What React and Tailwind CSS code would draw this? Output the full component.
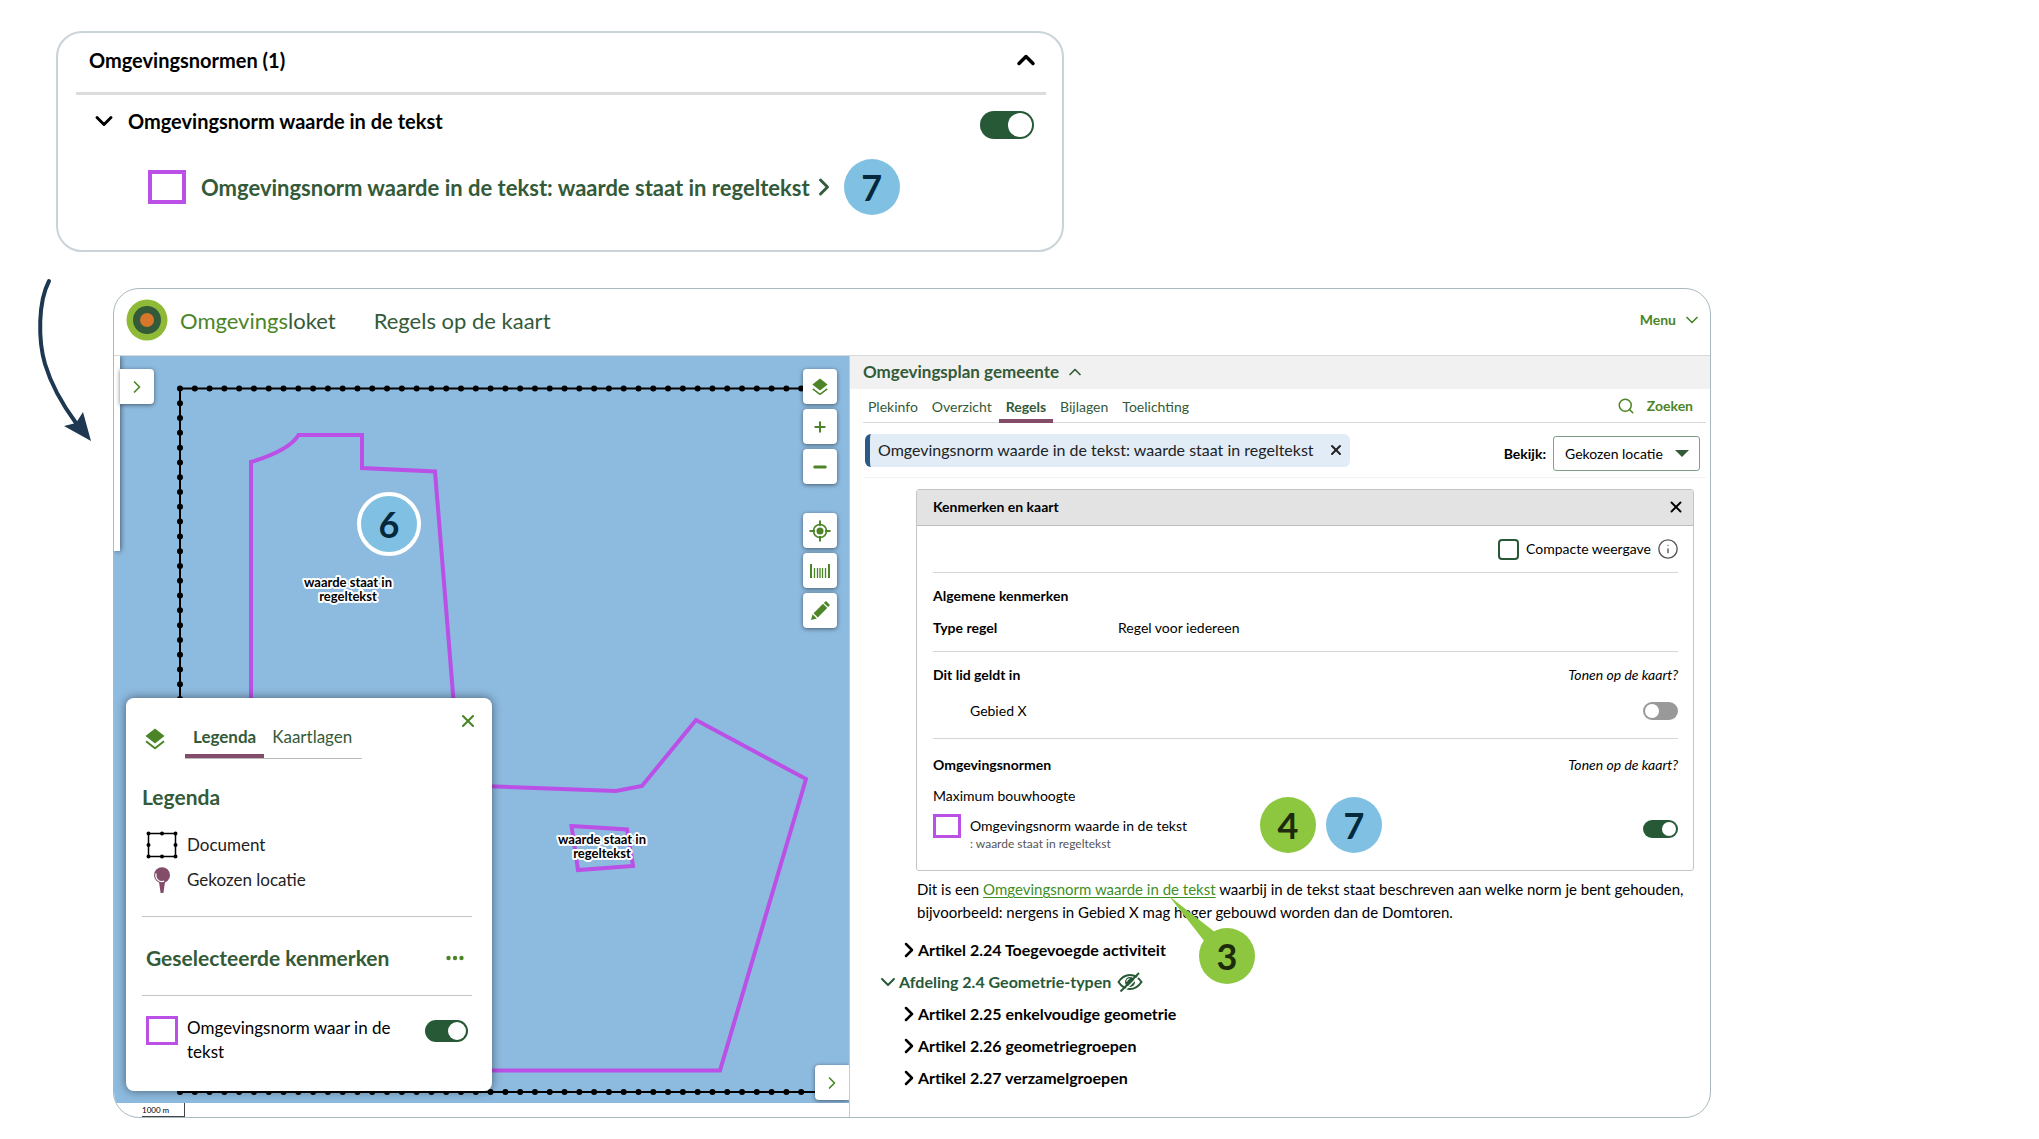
import { ChevronDown, ChevronRight, ChevronUp, Info, Minus, Plus, Search, X } from "lucide-react";

const articles = [
  "Artikel 2.25 enkelvoudige geometrie",
  "Artikel 2.26 geometriegroepen",
  "Artikel 2.27 verzamelgroepen",
];

const tabs = ["Plekinfo", "Overzicht", "Regels", "Bijlagen", "Toelichting"];

const toggleSizes = {
  sm: "h-[18px] w-[35px] before:size-[14px] before:top-[2px]",
  md: "h-[22px] w-[43px] before:size-[18px] before:top-[2px]",
  lg: "h-[28px] w-[54px] before:size-[24px] before:top-[2px]",
};

function Toggle({ size = "sm", label, defaultChecked = true, className = "" }) {
  return (
    <input
      type="checkbox"
      role="switch"
      aria-label={label}
      defaultChecked={defaultChecked}
      className={`relative shrink-0 appearance-none rounded-full bg-[#999999] before:absolute before:left-[2px] before:rounded-full before:bg-white checked:bg-[#275937] checked:before:right-[2px] checked:before:left-auto ${toggleSizes[size]} ${className}`}
    />
  );
}

const badgeColors = {
  blue: "bg-[#80c1e3] text-[#04293d]",
  green: "bg-[#8dc63f] text-[#1d2b0c]",
};

function Badge({ color = "blue", className = "", children }) {
  return (
    <span
      className={`flex size-14 shrink-0 items-center justify-center rounded-full text-4xl leading-none font-bold ${badgeColors[color]} ${className}`}
    >
      {children}
    </span>
  );
}

function LayersIcon({ className }) {
  return (
    <svg viewBox="0 0 20 22" className={className} fill="none" aria-hidden="true">
      <path d="M10 0.500 19.500 8 10 15.500 0.500 8Z" fill="#4b8527" />
      <path d="M1 13.200 10 20.200 19 13.200" stroke="#4b8527" strokeWidth="2" />
    </svg>
  );
}

function LocateIcon() {
  return (
    <svg viewBox="0 0 22 22" className="size-[22px]" fill="none" stroke="#4b8527" strokeWidth="1.600">
      <circle cx="11" cy="11" r="6.500" />
      <circle cx="11" cy="11" r="3.500" fill="#4b8527" stroke="none" />
      <path d="M11 0.500V6M11 16v5.500M0.500 11H6M16 11h5.500" strokeWidth="2" />
    </svg>
  );
}

function RulerIcon() {
  return (
    <svg viewBox="0 0 20 14" className="h-[14px] w-5" stroke="#4b8527">
      <path d="M1 0v14M19 0v14" strokeWidth="2" />
      <path d="M4.500 4v10M7.500 4v10M10 4v10M12.500 4v10M15.500 4v10" strokeWidth="1.300" />
    </svg>
  );
}

function PencilIcon() {
  return (
    <svg viewBox="0 0 20 20" className="size-5" fill="#4b8527">
      <path d="M1 19l1.600-5.800 4.200 4.200Z" />
      <path d="M3.600 12.200 13 2.800l4.200 4.200-9.400 9.400Z" />
      <path d="M13.900 1.900 15.200.6a1 1 0 0 1 1.400 0l2.800 2.800a1 1 0 0 1 0 1.400L18.100 6.100Z" />
    </svg>
  );
}

function PinIcon() {
  return (
    <svg viewBox="0 0 16 26" className="h-[26px] w-4" aria-hidden="true">
      <path d="M5 15h6L9.400 26H6.600Z" fill="#834c68" />
      <circle cx="8" cy="8.200" r="8" fill="#834c68" />
      <path d="M2.200 6.500a6 6 0 0 0 8 7.500" fill="none" stroke="#fff" strokeWidth="1.300" />
    </svg>
  );
}

function DocumentIcon() {
  return (
    <svg viewBox="0 0 32 28" className="h-7 w-8" fill="none" stroke="#000" aria-hidden="true">
      <path d="M2.500 2.500h27v23h-27Z" strokeWidth="1.500" />
      <path
        d="M2.500 2.500h0M16 2.500h0M29.500 2.500h0M2.500 14h0M29.500 14h0M2.500 25.500h0M16 25.500h0M29.500 25.500h0"
        strokeWidth="4"
        strokeLinecap="round"
      />
    </svg>
  );
}

function HiddenIcon() {
  return (
    <svg viewBox="0 0 26 20" className="h-5 w-[26px]" fill="none" stroke="#275937" strokeWidth="2">
      <path d="M1.500 10C4.500 5.500 8.500 3 13 3s8.500 2.500 11.500 7c-3 4.500-7 7-11.500 7S4.500 14.500 1.500 10Z" />
      <circle cx="13" cy="10" r="5" fill="#275937" stroke="none" />
      <path d="M9.500 9.500a4 4 0 0 1 3-3" stroke="#fff" strokeWidth="1.200" />
      <path d="M5.500 20.500 23.500 2.500" stroke="#fff" strokeWidth="1.500" />
      <path d="M3.500 19.500 22 1" />
    </svg>
  );
}

function NormCard() {
  return (
    <section className="ml-14 max-w-[1008px] rounded-[26px] border-2 border-[#c9d3d8] bg-white pr-4 pb-[23px] pl-[18px]">
      <div className="flex h-[62px] items-center justify-between border-b-[3px] border-[#dcdcdc] pr-[6px] pb-[6px] pl-[13px]">
        <h2 className="text-xl font-bold">Omgevingsnormen (1)</h2>
        <button type="button" aria-label="Inklappen">
          <ChevronUp className="size-7" strokeWidth={3} />
        </button>
      </div>
      <div className="flex h-[52px] items-center gap-[10px] pr-3 pl-[14px]">
        <button type="button" aria-label="Norm inklappen">
          <ChevronDown className="size-7" strokeWidth={2.5} />
        </button>
        <h3 className="grow text-xl font-bold">Omgevingsnorm waarde in de tekst</h3>
        <Toggle size="lg" label="Omgevingsnorm waarde in de tekst" className="mt-2" />
      </div>
      <div className="flex h-20 items-center pl-[72px]">
        <span className="h-[34px] w-[38px] border-4 border-[#ba50e6]" />
        <a href="#norm" className="ml-[15px] flex items-center text-[22px] font-bold text-[#335a39]">
          Omgevingsnorm waarde in de tekst: waarde staat in regeltekst
          <ChevronRight className="size-7" strokeWidth={2.5} />
        </a>
        <Badge className="ml-[6px]">7</Badge>
      </div>
    </section>
  );
}

function CurvedArrow() {
  return (
    <svg
      viewBox="0 0 60 166"
      className="absolute top-[278px] left-[35px] h-[166px] w-[60px]"
      fill="none"
      aria-hidden="true"
    >
      <path d="M14 3C3 24 3 62 10 86c6 20 17 40 31 59" stroke="#1d3850" strokeWidth="4" strokeLinecap="round" />
      <path d="M56 163 29 148l12-3 7-11Z" fill="#1d3850" />
    </svg>
  );
}

function Header() {
  return (
    <header className="flex h-[67px] items-center border-b border-[#d5dadb] pr-2 pb-1 pl-3">
      <svg viewBox="0 0 42 42" className="size-[42px]" aria-hidden="true">
        <circle cx="21" cy="21" r="20.500" fill="#8fba38" />
        <circle cx="21" cy="21" r="14" fill="#335a39" />
        <circle cx="21" cy="21" r="7" fill="#d8762c" />
      </svg>
      <a href="#home" className="ml-3 text-[22px] text-[#335a39]">
        <span className="text-[#4b8527]">Omgevings</span>loket
      </a>
      <h1 className="ml-[38px] text-[22px] text-[#335a39]">Regels op de kaart</h1>
      <button type="button" className="ml-auto flex items-center gap-[6px] text-sm font-bold text-[#4b8527]">
        Menu
        <ChevronDown className="size-5" strokeWidth={2} />
      </button>
    </header>
  );
}

function MapButton({ label, className = "", children }) {
  return (
    <button
      type="button"
      aria-label={label}
      className={`flex h-[35px] w-[34px] items-center justify-center rounded-sm bg-white text-[#4b8527] shadow-[0_1px_4px_rgba(0,0,0,0.5)] ${className}`}
    >
      {children}
    </button>
  );
}

function MapLabel({ x, y }) {
  return (
    <text
      x={x}
      y={y}
      textAnchor="middle"
      className="fill-black stroke-white stroke-[4px] text-[13px] font-bold [paint-order:stroke]"
      strokeLinejoin="round"
    >
      <tspan x={x}>waarde staat in</tspan>
      <tspan x={x} dy="14">
        regeltekst
      </tspan>
    </text>
  );
}

function Legend() {
  return (
    <aside className="absolute bottom-3 left-3 w-[366px] rounded-lg bg-white pt-5 pr-5 pb-[27px] pl-4 shadow-[0_0_10px_rgba(0,0,0,0.5)]">
      <button type="button" aria-label="Sluiten" className="absolute top-[13px] right-[14px] text-[#4b8527]">
        <X className="size-5" strokeWidth={2.5} />
      </button>
      <div className="flex h-[41px] items-center">
        <LayersIcon className="ml-[3px] h-[22px] w-5" />
        <nav className="ml-5 flex h-full border-b border-[#bbbbbb] text-[17px] leading-[38px] text-[#335a39]">
          <a href="#legenda" className="border-b-4 border-[#834c68] px-2 font-bold">
            Legenda
          </a>
          <a href="#kaartlagen" className="pr-[10px] pl-2">
            Kaartlagen
          </a>
        </nav>
      </div>
      <h2 className="mt-6 mb-4 text-[21px] leading-7 font-bold text-[#335a39]">Legenda</h2>
      <ul className="border-b border-[#c4c4c4] pb-[19px] text-[17px] leading-[35px] text-[#222]">
        <li className="flex h-[35px] items-center gap-[9px] pl-1">
          <DocumentIcon />
          Document
        </li>
        <li className="flex h-[35px] items-center gap-[9px] pl-1">
          <span className="flex w-8 justify-center">
            <PinIcon />
          </span>
          Gekozen locatie
        </li>
      </ul>
      <div className="flex h-[79px] items-center justify-between border-b border-[#c4c4c4] pt-1 pr-2 pl-1">
        <h2 className="text-[21px] font-bold text-[#335a39]">Geselecteerde kenmerken</h2>
        <button type="button" aria-label="Meer opties">
          <svg viewBox="0 0 18 6" className="h-[6px] w-[18px]" fill="#4b8527">
            <circle cx="2.500" cy="3" r="2.200" />
            <circle cx="9" cy="3" r="2.200" />
            <circle cx="15.500" cy="3" r="2.200" />
          </svg>
        </button>
      </div>
      <div className="flex items-start pt-5 pr-1 pl-1">
        <span className="h-[29px] w-8 shrink-0 border-3 border-[#ba50e6]" />
        <p className="ml-[9px] w-[220px] text-[17px] leading-6">Omgevingsnorm waar in de tekst</p>
        <span className="ml-auto flex pt-1">
          <Toggle size="md" label="Omgevingsnorm waar in de tekst" />
        </span>
      </div>
    </aside>
  );
}

function MapPane() {
  return (
    <div className="flex flex-col border-r border-[#b9cfdc]">
      <div className="relative grow overflow-hidden bg-[#8dbadf]">
        <svg className="absolute inset-0 size-full" fill="none">
          <g stroke="#000">
            <path d="M66 32.500H701M66 32.500V736H710" strokeWidth="2" />
            <path
              d="M66 32.500H690M66 32.500V736M66 736H701"
              strokeWidth="6"
              strokeLinecap="round"
              strokeDasharray="0 14.790"
            />
          </g>
          <g stroke="#ba50e6" strokeWidth="4">
            <path d="M137 400V106C160 99 178 90 184.500 79H248V112L321 115.500 344 400" />
            <path d="M340 429 502 435 528 430 582 364 692 423 606 714.500H340" />
            <path d="M457.500 470 513 473.500 519 510 464 514Z" />
          </g>
          <MapLabel x={234} y={231} />
          <MapLabel x={488} y={488} />
        </svg>

        <div className="absolute top-0 left-0 h-[195px] w-[6px] bg-white shadow-[1px_0_5px_rgba(0,0,0,0.5)]" />
        <MapButton label="Zijpaneel openen" className="absolute top-[13px] left-[6px] rounded-l-none">
          <ChevronRight className="size-5" />
        </MapButton>

        <Badge className="absolute top-[136px] left-[243px] box-content border-4 border-white">6</Badge>

        <div className="absolute top-[13px] right-3 flex flex-col gap-[5px]">
          <MapButton label="Kaartlagen">
            <LayersIcon className="h-[18px] w-4" />
          </MapButton>
          <MapButton label="Inzoomen">
            <Plus className="size-4" strokeWidth={3} />
          </MapButton>
          <MapButton label="Uitzoomen">
            <Minus className="size-[18px]" strokeWidth={4} />
          </MapButton>
          <MapButton label="Mijn locatie" className="mt-6">
            <LocateIcon />
          </MapButton>
          <MapButton label="Meten">
            <RulerIcon />
          </MapButton>
          <MapButton label="Tekenen">
            <PencilIcon />
          </MapButton>
        </div>

        <MapButton label="Paneel inklappen" className="absolute right-0 bottom-[3px] rounded-r-none">
          <ChevronRight className="size-5" />
        </MapButton>
        <Legend />
      </div>
      <div className="flex h-[14px] pl-7">
        <span className="w-[43px] border-r border-b border-[#444] text-[8px] leading-[14px]">1000 m</span>
      </div>
    </div>
  );
}

function Section({ title, action, children }) {
  return (
    <div className="mr-[15px] ml-4 border-b border-[#d5d5d5] py-[7px] last:border-0 last:pt-[10px] last:pb-4">
      <div className="flex h-8 items-center justify-between">
        <h4 className="font-bold">{title}</h4>
        {action && <span className="italic">{action}</span>}
      </div>
      {children}
    </div>
  );
}

function Properties() {
  return (
    <section className="mt-[11px] mr-4 ml-[66px] rounded-[3px] border border-[#c4c4c4] text-sm">
      <div className="flex h-9 items-center justify-between border-b border-[#bdbdbd] bg-[#e3e3e3] pr-2 pb-[2px] pl-4">
        <h3 className="font-bold">Kenmerken en kaart</h3>
        <button type="button" aria-label="Kenmerken sluiten">
          <X className="size-[18px]" strokeWidth={2.5} />
        </button>
      </div>
      <div className="mr-[15px] ml-4 flex h-[47px] items-center justify-end gap-[6px] border-b border-[#d5d5d5]">
        <label className="flex items-center gap-[7px]">
          <input type="checkbox" className="size-[21px] appearance-none rounded-sm border-2 border-[#275937]" />
          Compacte weergave
        </label>
        <Info className="-mr-px size-[22px] text-[#555]" strokeWidth={1.5} />
      </div>
      <Section title="Algemene kenmerken">
        <dl className="flex h-8 items-center">
          <dt className="w-[185px] font-bold">Type regel</dt>
          <dd>Regel voor iedereen</dd>
        </dl>
      </Section>
      <Section title="Dit lid geldt in" action="Tonen op de kaart?">
        <div className="flex h-10 items-center justify-between pl-[37px]">
          Gebied X
          <Toggle label="Gebied X" defaultChecked={false} />
        </div>
      </Section>
      <Section title="Omgevingsnormen" action="Tonen op de kaart?">
        <p className="leading-[30px]">Maximum bouwhoogte</p>
        <div className="relative flex h-[43px] items-start pt-[3px]">
          <span className="h-6 w-7 border-3 border-[#ba50e6]" />
          <div className="ml-[9px] grow">
            <p className="leading-6">Omgevingsnorm waarde in de tekst</p>
            <p className="text-xs leading-3 text-[#555]">: waarde staat in regeltekst</p>
          </div>
          <div className="absolute -top-[14px] left-[327px] flex gap-[10px]">
            <Badge color="green">4</Badge>
            <Badge>7</Badge>
          </div>
          <span className="flex pt-[6px]">
            <Toggle label="Maximum bouwhoogte" />
          </span>
        </div>
      </Section>
    </section>
  );
}

function ArticleRow({ title }) {
  return (
    <li className="ml-[47px] flex h-8 items-center">
      <ChevronRight className="-mr-[3px] size-6" strokeWidth={2.5} />
      <a href="#artikel">{title}</a>
    </li>
  );
}

function RulesPane() {
  return (
    <div className="min-w-0 pb-[23px]">
      <div className="flex h-[33px] items-center bg-[#f1f1f1] pb-px pl-[13px] text-[#335a39]">
        <h2 className="text-[17px] font-bold">Omgevingsplan gemeente</h2>
        <ChevronUp className="ml-[6px] size-5" />
      </div>

      <div className="mr-1 ml-[13px] flex h-[34px] items-center border-b border-[#d8d8d8] text-sm text-[#335a39]">
        <nav className="-ml-[2px] flex h-[34px]">
          {tabs.map((tab) => (
            <a
              key={tab}
              href={`#${tab}`}
              className={
                tab === "Regels"
                  ? "border-b-4 border-[#834c68] px-[7px] leading-[35px] font-bold"
                  : "px-[7px] leading-[35px]"
              }
            >
              {tab}
            </a>
          ))}
        </nav>
        <button type="button" className="mr-[13px] ml-auto flex items-center gap-3 font-bold text-[#4b8527]">
          <Search className="size-[18px]" />
          Zoeken
        </button>
      </div>

      <div className="mr-1 ml-[13px] flex h-[55px] items-start border-b border-[#f3f3f3] pt-[11px] pr-[6px]">
        <div className="ml-[2px] flex h-[33px] items-center gap-[14px] rounded-md border-l-[5px] border-[#2b5a87] bg-[#e1ecf7] pr-[6px] pb-[2px] pl-2 text-base text-[#222]">
          Omgevingsnorm waarde in de tekst: waarde staat in regeltekst
          <button type="button" aria-label="Filter verwijderen">
            <X className="size-4" strokeWidth={3} />
          </button>
        </div>
        <div className="relative mt-[2px] ml-auto flex items-center gap-[7px] text-sm">
          <label htmlFor="bekijk" className="font-bold">
            Bekijk:
          </label>
          <select
            id="bekijk"
            className="h-[35px] w-[147px] appearance-none rounded-[3px] border border-[#7f9f8a] bg-white pl-[11px]"
          >
            <option>Gekozen locatie</option>
          </select>
          <svg viewBox="0 0 14 7" className="pointer-events-none absolute right-[11px] h-[7px] w-[14px]">
            <path d="M0 0h14L7 7Z" fill="#335a39" />
          </svg>
        </div>
      </div>

      <Properties />

      <div className="relative ml-[67px] pt-[7px] text-[15px] leading-[23px]">
        <p>
          Dit is een{" "}
          <a href="#norm" className="text-[#3f8f1f] underline underline-offset-2">
            Omgevingsnorm waarde in de tekst
          </a>{" "}
          waarbij in de tekst staat beschreven aan welke norm je bent gehouden,
          <br />
          bijvoorbeeld: nergens in Gebied X mag hoger gebouwd worden dan de Domtoren.
        </p>
        <svg viewBox="0 0 50 50" className="absolute top-[25px] left-[252px] size-[50px]" aria-hidden="true">
          <path d="M0 0 47 37 36 46Z" fill="#8dc63f" />
        </svg>
        <Badge color="green" className="absolute top-[57px] left-[282px]">
          3
        </Badge>
      </div>

      <ul className="mt-[10px] text-base font-bold">
        <ArticleRow title="Artikel 2.24 Toegevoegde activiteit" />
        <li className="ml-[26px] flex h-8 items-center text-[#275937]">
          <ChevronDown className="-mr-px size-6" />
          <a href="#afdeling">Afdeling 2.4 Geometrie-typen</a>
          <span className="ml-[6px]">
            <HiddenIcon />
          </span>
        </li>
        {articles.map((title) => (
          <ArticleRow key={title} title={title} />
        ))}
      </ul>
    </div>
  );
}

export default function App() {
  return (
    <main className="relative min-h-screen bg-white pt-[31px] pb-5 font-['Lato',sans-serif] text-black">
      <NormCard />
      <CurvedArrow />
      <section className="mt-9 ml-[113px] max-w-[1598px] overflow-hidden rounded-[26px] border border-[#a9b9c0]">
        <Header />
        <div className="grid grid-cols-[736fr_860fr]">
          <MapPane />
          <RulesPane />
        </div>
      </section>
    </main>
  );
}
